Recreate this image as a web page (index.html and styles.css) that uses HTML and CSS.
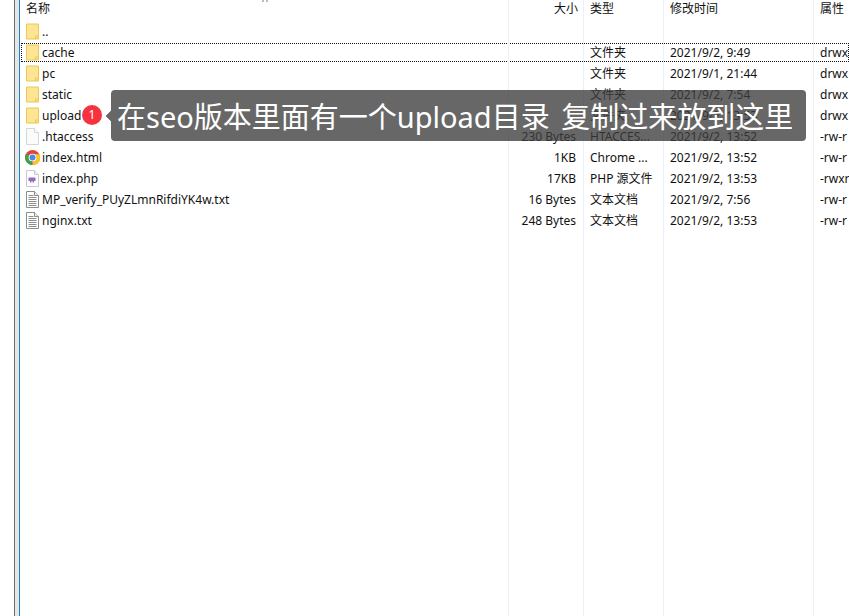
FILE: index.html
```html
<!DOCTYPE html>
<html lang="zh-CN">
<head>
<meta charset="utf-8">
<title>文件列表</title>
<link rel="stylesheet" href="styles.css">
</head>
<body>
<svg class="defs" width="0" height="0" aria-hidden="true">
  <symbol id="folder" viewBox="0 0 13 16">
    <path d="M.5.5h12v15H.5z" fill="#fde593" stroke="#ebc952"/>
    <path d="M9.500 15.500v-3h3z" fill="#fff6d2" stroke="#ebc952"/>
  </symbol>
  <symbol id="blank" viewBox="0 0 13 17">
    <path d="M.5.5h8l4 4v12H.5z" fill="#fbfbfb" stroke="#d6d6d6"/>
    <path d="M8.500.5v4h4" fill="#fff" stroke="#d6d6d6"/>
  </symbol>
  <symbol id="text" viewBox="0 0 13 17">
    <path d="M.5.5h8l4 4v12H.5z" fill="#fff" stroke="#8c8c8c"/>
    <path d="M8.500.5v4h4" fill="#eee" stroke="#8c8c8c"/>
    <path d="M2.500 4.500h5M2.500 6.500h8M2.500 8.500h8M2.500 10.500h8M2.500 12.500h8M2.500 14.500h8" stroke="#8c8c8c" fill="none"/>
  </symbol>
  <symbol id="php" viewBox="0 0 13 17">
    <path d="M.5.5h8l4 4v12H.5z" fill="#fff" stroke="#c9c9d2"/>
    <path d="M8.500.5v4h4" fill="#f2f2f2" stroke="#c9c9d2"/>
    <path d="M2.500 7.500h7v3.500h-1.500v1.500h-1.500v-1.500h-1v1.500h-1.500v-1.500h-1.500z" fill="#8d6fc0"/>
  </symbol>
  <symbol id="chrome" viewBox="0 0 14 14">
    <circle cx="7" cy="7" r="7" fill="#e0453a"/>
    <path d="M7 7 1 3.500A7 7 0 0 0 7 14z" fill="#3fa34d"/>
    <path d="M7 7v7A7 7 0 0 0 13.800 4H7z" fill="#f6c433"/>
    <circle cx="7" cy="7" r="3.600" fill="#fff"/>
    <circle cx="7" cy="7" r="2.800" fill="#4a89e8"/>
  </symbol>
</svg>

<main class="window">
  <div class="rail"></div>
  <section class="list">
    <div class="row head">
      <span class="name">名称</span><span class="size">大小</span><span>类型</span><span>修改时间</span><span>属性</span>
    </div>
    <div class="row">
      <span class="name"><svg class="icon"><use href="#folder"/></svg>..</span><span class="size"></span><span></span><span></span><span></span>
    </div>
    <div class="row selected">
      <span class="name"><svg class="icon"><use href="#folder"/></svg>cache</span><span class="size"></span><span>文件夹</span><span>2021/9/2, 9:49</span><span>drwx</span>
    </div>
    <div class="row">
      <span class="name"><svg class="icon"><use href="#folder"/></svg>pc</span><span class="size"></span><span>文件夹</span><span>2021/9/1, 21:44</span><span>drwx</span>
    </div>
    <div class="row">
      <span class="name"><svg class="icon"><use href="#folder"/></svg>static</span><span class="size"></span><span>文件夹</span><span>2021/9/2, 7:54</span><span>drwx</span>
    </div>
    <div class="row">
      <span class="name"><svg class="icon"><use href="#folder"/></svg>upload</span><span class="size"></span><span>文件夹</span><span>2021/9/2, 13:53</span><span>drwx</span>
    </div>
    <div class="row">
      <span class="name"><svg class="icon"><use href="#blank"/></svg>.htaccess</span><span class="size">230 Bytes</span><span>HTACCES...</span><span>2021/9/2, 13:52</span><span>-rw-r</span>
    </div>
    <div class="row">
      <span class="name"><svg class="icon wide"><use href="#chrome"/></svg>index.html</span><span class="size">1KB</span><span>Chrome ...</span><span>2021/9/2, 13:52</span><span>-rw-r</span>
    </div>
    <div class="row">
      <span class="name"><svg class="icon"><use href="#php"/></svg>index.php</span><span class="size">17KB</span><span>PHP 源文件</span><span>2021/9/2, 13:53</span><span>-rwxr</span>
    </div>
    <div class="row">
      <span class="name"><svg class="icon"><use href="#text"/></svg>MP_verify_PUyZLmnRifdiYK4w.txt</span><span class="size">16 Bytes</span><span>文本文档</span><span>2021/9/2, 7:56</span><span>-rw-r</span>
    </div>
    <div class="row">
      <span class="name"><svg class="icon"><use href="#text"/></svg>nginx.txt</span><span class="size">248 Bytes</span><span>文本文档</span><span>2021/9/2, 13:53</span><span>-rw-r</span>
    </div>
    <div class="dividers">
      <i></i><i></i><i></i><i></i>
    </div>
    <div class="sort-mark"></div>
  </section>
</main>

<div class="badge">1</div>
<div class="tip">在seo版本里面有一个upload目录 复制过来放到这里</div>
</body>
</html>
```

FILE: styles.css
```css
* { box-sizing: border-box; }
html, body { margin: 0; height: 100%; background: #fff; overflow: hidden; }
body {
  position: relative;
  font-family: "Noto Sans", "Noto Sans CJK SC", sans-serif;
  font-size: 12px;
  color: #111;
}
.defs { position: absolute; }
.window { display: flex; height: 616px; padding-left: 14px; }
.rail {
  width: 6px;
  flex: none;
  background: #e6e6e6;
  border-left: 1px solid #6e6e6e;
  border-right: 1px solid #1a82c8;
}
.list { position: relative; flex: 1; min-width: 0; }
.row {
  position: relative;
  display: grid;
  grid-template-columns: 488px 75px 80px 150px 1fr;
  height: 21px;
  align-items: center;
  white-space: nowrap;
  overflow: hidden;
}
.row > span { padding-left: 7px; line-height: 21px; }
.row > .name { display: flex; align-items: center; padding-left: 6px; }
.row > .size { padding: 0 7px 0 0; text-align: right; }
.head { height: 17px; margin-bottom: 4px; }
.head > span { line-height: 17px; }
.head > .size { padding-right: 5px; }
.icon { width: 13px; height: 17px; margin-right: 3px; flex: none; }
.icon.wide { width: 15px; height: 15px; margin: 0 2px 0 -1px; }
.selected {
  height: 19px;
  margin: 1px 0 1px 1px;
  grid-template-columns: 487px 75px 80px 150px 1fr;
  outline: 1px dotted #111;
  outline-offset: -1px;
}
.selected > .name { padding-left: 5px; }
.selected > span { line-height: 19px; }
.dividers { position: absolute; inset: 0; pointer-events: none; }
.dividers i { position: absolute; top: 0; bottom: 0; width: 1px; background: #eaf0f8; }
.dividers i:nth-child(1) { left: 488px; }
.dividers i:nth-child(2) { left: 563px; }
.dividers i:nth-child(3) { left: 643px; }
.dividers i:nth-child(4) { left: 793px; }
.sort-mark {
  position: absolute;
  left: 242px;
  top: 0;
  width: 6px;
  height: 2px;
  border-left: 2px solid #bbb;
  border-right: 2px solid #bbb;
}
.badge {
  position: absolute;
  left: 82px;
  top: 105px;
  width: 20px;
  height: 20px;
  border-radius: 50%;
  background: #f5333f;
  color: #fff;
  text-align: center;
  line-height: 20px;
  font-size: 12px;
}
.tip {
  position: absolute;
  left: 111px;
  top: 90px;
  width: 695px;
  height: 51px;
  padding-left: 6px;
  border-radius: 4px;
  background: rgba(60, 60, 60, .78);
  color: #fff;
  font-size: 29px;
  word-spacing: 4px;
  line-height: 53px;
  white-space: nowrap;
}
.tip::before {
  content: "";
  position: absolute;
  left: -4px;
  top: 22px;
  width: 8px;
  height: 8px;
  background: rgba(60, 60, 60, .78);
  transform: rotate(45deg);
  clip-path: polygon(0 0, 0 100%, 100% 100%);
}
```
